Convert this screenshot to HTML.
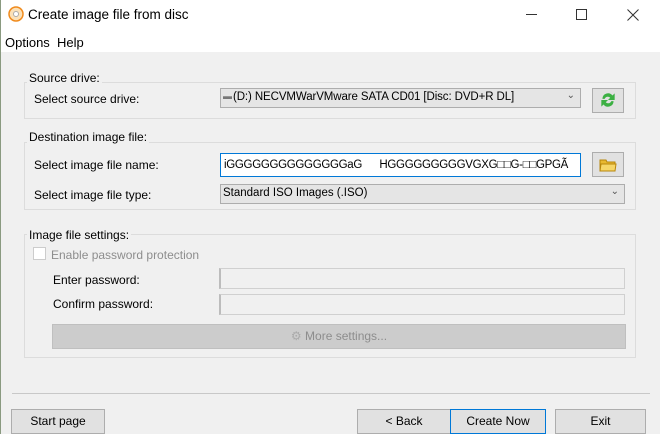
<!DOCTYPE html>
<html><head><style>
*{margin:0;padding:0;box-sizing:border-box}
body{width:660px;height:434px;overflow:hidden;background:#f0f0f0;font-family:"Liberation Sans",sans-serif;font-size:12px;color:#000;position:relative}
.a{position:absolute}
.gb{position:absolute;border:1px solid #dcdcdc}
.gl{position:absolute;background:#f0f0f0;padding:0 2px}
.box{position:absolute;border:1px solid #adadad;background:#e5e5e5}
.btn{position:absolute;border:1px solid #adadad;background:#e1e1e1;text-align:center;line-height:23px}
.dis{position:absolute;border:1px solid #d0d0d0;border-left:2px solid #bcbcbc;background:#f0f0f0}
</style></head><body>
<div class="a" style="left:0;top:0;width:660px;height:52px;background:#fff"></div>
<div class="a" style="left:0;top:0;width:1px;height:434px;background:#8a9a80"></div>
<svg class="a" style="left:8px;top:6px" width="16" height="16"><circle cx="8" cy="8" r="7" fill="#fbe1b8" stroke="#f08a1c" stroke-width="1.5"/><circle cx="8" cy="8" r="2.5" fill="#fff" stroke="#aaa"/></svg>
<div class="a" style="left:28px;top:7px;font-size:13.5px">Create image file from disc</div>
<div class="a" style="left:526px;top:14px;width:11px;height:1px;background:#333"></div>
<div class="a" style="left:576px;top:9px;width:11px;height:11px;border:1px solid #333"></div>
<svg class="a" style="left:627px;top:9px" width="12" height="12"><path d="M0.5 0.5L11.5 11.5M11.5 0.5L0.5 11.5" stroke="#333" stroke-width="1"/></svg>
<div class="a" style="left:5px;top:35px;font-size:13px">Options&nbsp; Help</div>

<div class="gb" style="left:24px;top:82px;width:612px;height:37px"></div>
<div class="gl" style="left:27px;top:71px">Source drive:</div>
<div class="a" style="left:34px;top:92px">Select source drive:</div>
<div class="box" style="left:220px;top:88px;width:361px;height:20px"><span class="a" style="left:2px;top:2px;color:#777;font-size:9px">▬</span><span class="a" style="left:12px;top:2px;font-size:11.5px;letter-spacing:-0.1px">(D:) NECVMWarVMware SATA CD01 [Disc: DVD+R DL]</span><span class="a" style="right:5px;top:1px;color:#555;font-size:10px">⌄</span></div>
<div class="btn" style="left:592px;top:88px;width:32px;height:25px"><svg width="20" height="20" viewBox="0 0 16 18" style="margin-top:1px"><path d="M3 8a5 5 0 0 1 9-3l2-2v6h-6l2-2a3 3 0 0 0-5 1z M13 10a5 5 0 0 1-9 3l-2 2v-6h6l-2 2a3 3 0 0 0 5-1z" fill="#3cb043"/></svg></div>

<div class="gb" style="left:24px;top:142px;width:612px;height:68px"></div>
<div class="gl" style="left:27px;top:130px">Destination image file:</div>
<div class="a" style="left:34px;top:158px">Select image file name:</div>
<div class="a" style="left:220px;top:153px;width:361px;height:24px;border:1px solid #0078d7;background:#fff;overflow:hidden;white-space:pre;padding:5px 0 0 3px;font-size:11.5px;letter-spacing:-0.3px">iGGGGGGGGGGGGGGaG      HGGGGGGGGGVGXG□□G-□□GPGÃ</div>
<div class="btn" style="left:592px;top:152px;width:32px;height:25px"><svg width="18" height="14" style="margin-top:5px"><path d="M1 2h6l1 2h8v9H1z" fill="#e8b830" stroke="#b8860b"/><path d="M2 6h15l-1 7H1z" fill="#f6d668" stroke="#b8860b"/></svg></div>
<div class="a" style="left:34px;top:188px">Select image file type:</div>
<div class="box" style="left:220px;top:184px;width:405px;height:20px"><span class="a" style="left:2px;top:2px;font-size:11.5px">Standard ISO Images (.ISO)</span><span class="a" style="right:5px;top:1px;color:#555;font-size:10px">⌄</span></div>

<div class="gb" style="left:24px;top:234px;width:612px;height:124px"></div>
<div class="gl" style="left:27px;top:228px">Image file settings:</div>
<div class="a" style="left:33px;top:247px;width:13px;height:13px;border:1px solid #ccc;background:#fff"></div>
<div class="a" style="left:51px;top:248px;color:#8d8d8d">Enable password protection</div>
<div class="a" style="left:53px;top:273px">Enter password:</div>
<div class="dis" style="left:219px;top:268px;width:406px;height:21px"></div>
<div class="a" style="left:53px;top:297px">Confirm password:</div>
<div class="dis" style="left:219px;top:294px;width:406px;height:21px"></div>
<div class="a" style="left:52px;top:324px;width:574px;height:25px;background:#cccccc;border:1px solid #bfbfbf;text-align:center;line-height:23px;color:#8d8d8d"><span style="color:#aaa">⚙</span> More settings...</div>

<div class="a" style="left:12px;top:393px;width:638px;height:1px;background:#c8c8c8"></div>
<div class="btn" style="left:11px;top:409px;width:94px;height:25px">Start page</div>
<div class="btn" style="left:357px;top:409px;width:94px;height:25px">&lt; Back</div>
<div class="btn" style="left:450px;top:409px;width:96px;height:25px;border:1px solid #0078d7">Create Now</div>
<div class="btn" style="left:555px;top:409px;width:91px;height:25px">Exit</div>
</body></html>
